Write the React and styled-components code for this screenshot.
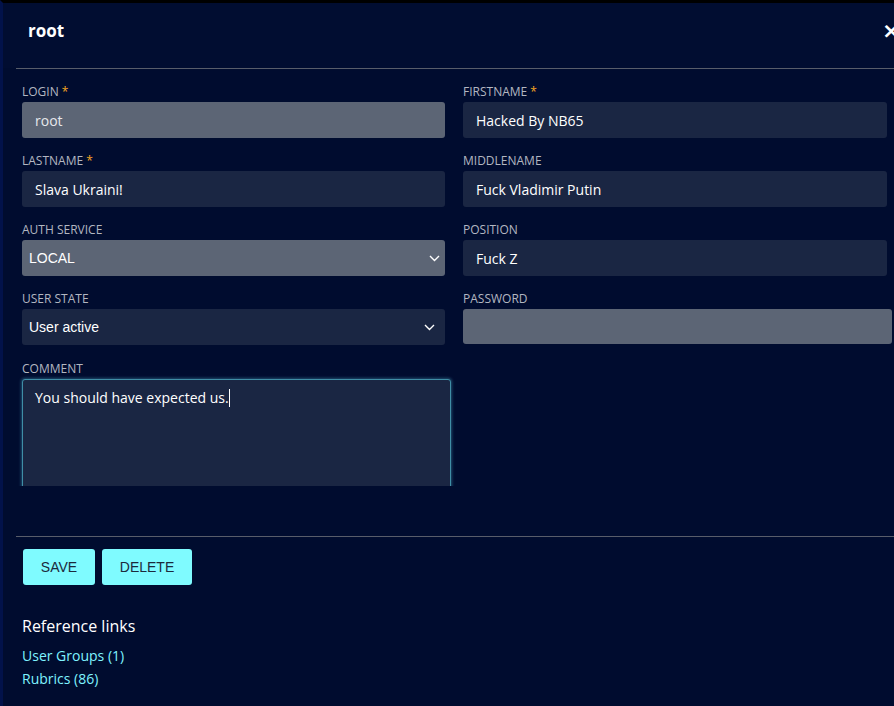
import React from "react";
import styled, { createGlobalStyle } from "styled-components";

const GlobalStyle = createGlobalStyle`
  html, body {
    margin: 0;
    padding: 0;
    background: #000c2f;
    overflow: hidden;
  }
  * {
    box-sizing: border-box;
  }
`;

const Panel = styled.div`
  width: 906px;
  height: 706px;
  background: #000c2f;
  border-top: 3px solid #000000;
  border-left: 3px solid #02124a;
  font-family: "Open Sans", "Noto Sans", sans-serif;
  color: #ffffff;
`;

const Header = styled.div`
  display: flex;
  align-items: center;
  justify-content: space-between;
  height: 65px;
  padding: 0 0 10px 25px;
  background: #010d31;
`;

const Title = styled.div`
  font-size: 17px;
  font-weight: 700;
`;

const Close = styled.div`
  font-family: "DejaVu Sans", sans-serif;
  font-size: 22px;
  font-weight: 700;
  width: 24px;
  line-height: 1;
`;

const Divider = styled.div`
  margin-left: 13px;
  border-bottom: 1px solid #585d6a;
`;

const FormArea = styled.div`
  height: 417px;
  overflow: hidden;
  padding: 15px 0 0 19px;
`;

const Grid = styled.div`
  display: grid;
  grid-template-columns: 423px 424px;
  column-gap: 18px;
  align-items: start;
`;

const Field = styled.div`
  display: flex;
  flex-direction: column;
  margin-bottom: 15px;
  margin-top: ${(p) => p.mt || 0}px;
`;

const Label = styled.div`
  font-size: 12px;
  line-height: 16px;
  color: #b3b7c1;
  text-transform: uppercase;
  margin-bottom: 2px;
`;

const Star = styled.span`
  color: #f5a623;
`;

const Input = styled.div`
  height: ${(p) => p.h || 36}px;
  margin-right: ${(p) => p.over || 0}px;
  border-radius: 3px;
  background: ${(p) => (p.disabled ? "#5c6575" : "#1a2643")};
  color: ${(p) => (p.disabled ? "#e6e8ec" : "#ffffff")};
  font-size: 14px;
  display: flex;
  align-items: center;
  padding-left: 13px;
`;

const Select = styled.div`
  height: 36px;
  border-radius: 3px;
  background: ${(p) => (p.disabled ? "#5c6575" : "#1a2643")};
  color: #ffffff;
  font-family: "Liberation Sans", Arial, sans-serif;
  font-size: 14px;
  display: flex;
  align-items: center;
  justify-content: space-between;
  padding: 0 ${(p) => p.pr}px 0 7px;
`;

const Area = styled.div`
  width: 429px;
  height: 150px;
  border: 1px solid #3f8ea6;
  border-radius: 3px;
  box-shadow: 0 0 3px 1px rgba(70, 160, 190, 0.45);
  background: #1a2643;
  font-size: 14px;
  padding: 8px 12px;
  line-height: 20px;
`;

const Caret = styled.span`
  display: inline-block;
  width: 1px;
  height: 18px;
  background: #ffffff;
  vertical-align: -4px;
`;

const Footer = styled.div`
  padding-top: 50px;
`;

const Buttons = styled.div`
  display: flex;
  gap: 7px;
  padding: 12px 0 0 20px;
`;

const Button = styled.button`
  height: 36px;
  width: ${(p) => p.w}px;
  border: none;
  border-radius: 3px;
  background: #7ffbff;
  color: #1c2a3c;
  font-family: "Liberation Sans", Arial, sans-serif;
  font-size: 14px;
  padding: 0;
`;

const Links = styled.div`
  padding: 30px 0 0 19px;
`;

const LinksTitle = styled.div`
  font-size: 16px;
  line-height: 22px;
  margin-bottom: 7px;
`;

const Link = styled.a`
  display: block;
  font-size: 14px;
  line-height: 23px;
  color: #7ff3ff;
  text-decoration: none;
`;

const Chevron = () => (
  <svg width="11" height="7" viewBox="0 0 11 7">
    <path d="M1 1l4.5 4.5L10 1" fill="none" stroke="#ffffff" strokeWidth="1.4" />
  </svg>
);

export default function App() {
  return (
    <>
      <GlobalStyle />
      <Panel>
        <Header>
          <Title>root</Title>
          <Close>×</Close>
        </Header>
        <Divider />
        <FormArea>
          <Grid>
            <Field>
              <Label>
                Login <Star>*</Star>
              </Label>
              <Input disabled>root</Input>
            </Field>
            <Field>
              <Label>
                Firstname <Star>*</Star>
              </Label>
              <Input>Hacked By NB65</Input>
            </Field>
            <Field>
              <Label>
                Lastname <Star>*</Star>
              </Label>
              <Input>Slava Ukraini!</Input>
            </Field>
            <Field>
              <Label>Middlename</Label>
              <Input>Fuck Vladimir Putin</Input>
            </Field>
            <Field>
              <Label>Auth service</Label>
              <Select disabled pr={5}>
                LOCAL
                <Chevron />
              </Select>
            </Field>
            <Field>
              <Label>Position</Label>
              <Input>Fuck Z</Input>
            </Field>
            <Field>
              <Label>User state</Label>
              <Select pr={10}>
                User active
                <Chevron />
              </Select>
            </Field>
            <Field>
              <Label>Password</Label>
              <Input disabled h={35} over={-5} />
            </Field>
            <Field mt={1}>
              <Label>Comment</Label>
              <Area>
                You should have expected us.
                <Caret />
              </Area>
            </Field>
          </Grid>
        </FormArea>
        <Footer>
          <Divider />
          <Buttons>
            <Button w={72}>SAVE</Button>
            <Button w={90}>DELETE</Button>
          </Buttons>
          <Links>
            <LinksTitle>Reference links</LinksTitle>
            <Link href="#">User Groups (1)</Link>
            <Link href="#">Rubrics (86)</Link>
          </Links>
        </Footer>
      </Panel>
    </>
  );
}
